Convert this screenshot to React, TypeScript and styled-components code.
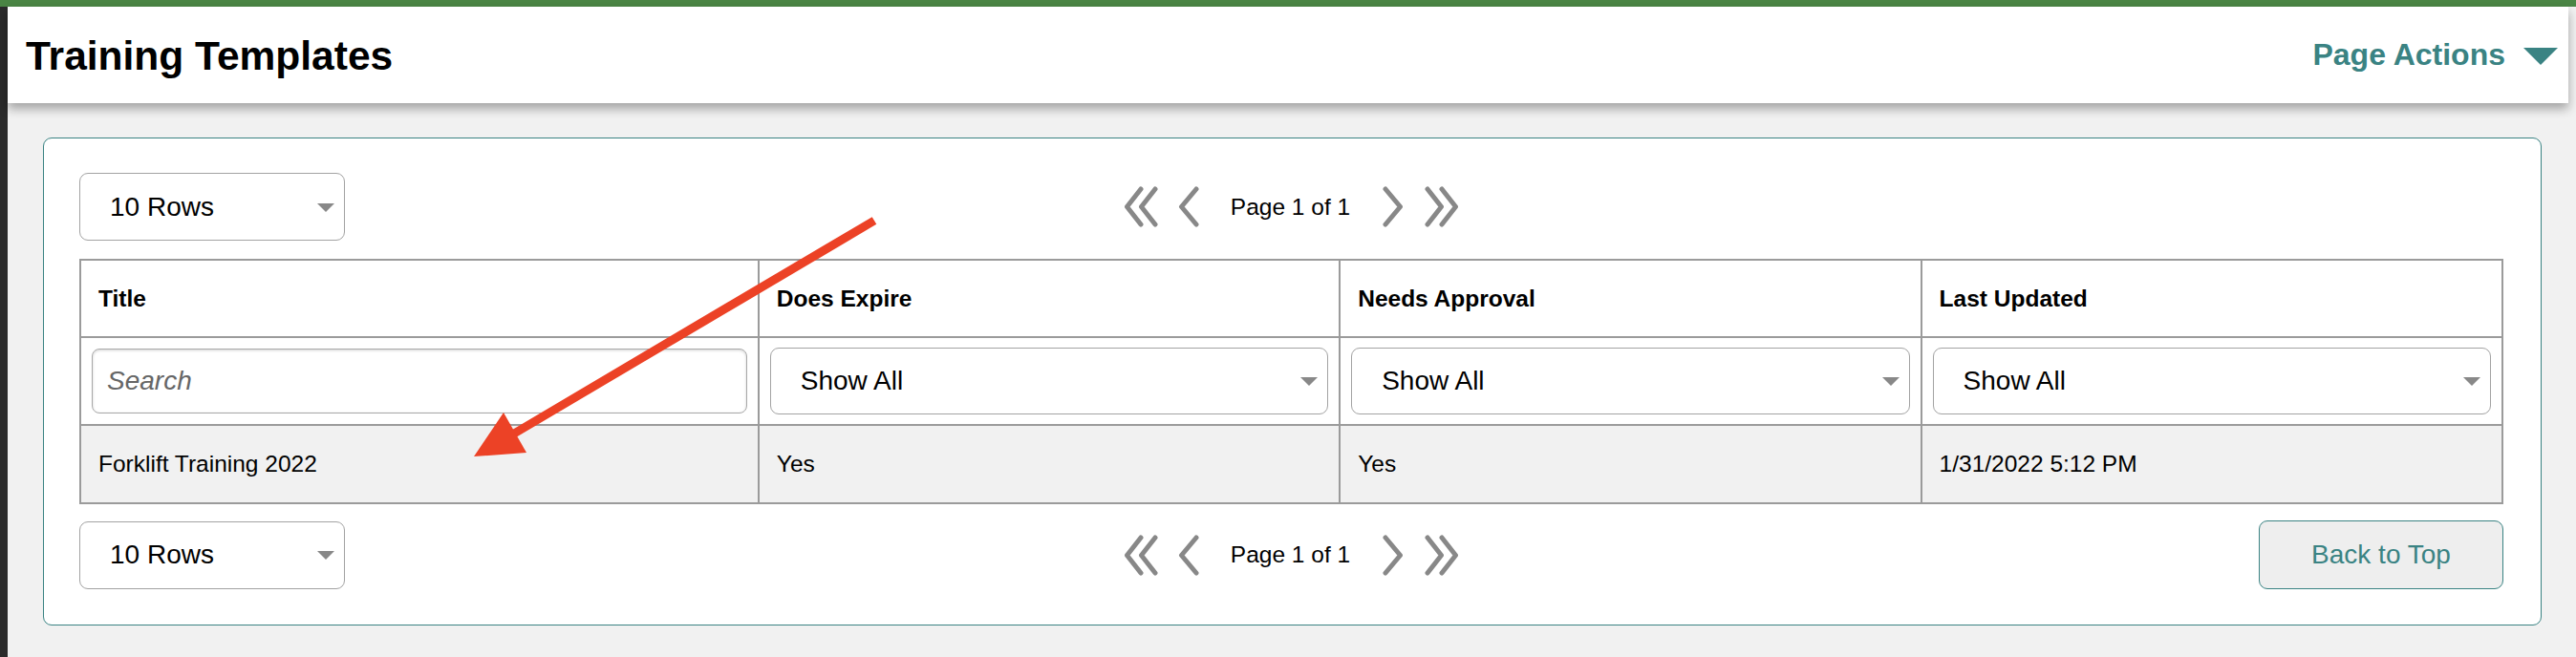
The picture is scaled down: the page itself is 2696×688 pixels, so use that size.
import React from "react";
import styled, { createGlobalStyle } from "styled-components";

const teal = "#3a8383";
const grid = "#9b9b9b";

const GlobalStyle = createGlobalStyle`
  html, body {
    margin: 0;
    padding: 0;
    background: #f1f1f1;
    font-family: "Liberation Sans", Arial, Helvetica, sans-serif;
    color: #000;
  }
  * { box-sizing: border-box; }
`;

const Page = styled.div`
  display: flex;
  flex-direction: column;
  min-height: 100vh;
  position: relative;
`;

const TopBar = styled.div`
  height: 7px;
  background: #4a8544;
`;

const Body = styled.div`
  flex: 1;
  display: flex;
`;

const SideStrip = styled.div`
  width: 8px;
  background: #2b2b2b;
`;

const Main = styled.div`
  flex: 1;
  display: flex;
  flex-direction: column;
`;

const Header = styled.header`
  height: 101px;
  margin-right: 8px;
  background: #fff;
  display: flex;
  align-items: center;
  justify-content: space-between;
  padding: 0 11px 0 19px;
  box-shadow: 0 6px 10px rgba(0, 0, 0, 0.32);
  position: relative;
  z-index: 1;
`;

const Title = styled.h1`
  margin: 0;
  font-size: 42.5px;
  font-weight: 700;
  padding-top: 2px;
`;

const ActionsButton = styled.button`
  display: flex;
  align-items: center;
  gap: 19px;
  border: 0;
  background: none;
  padding: 0;
  font-family: inherit;
  font-size: 32px;
  font-weight: 700;
  color: ${teal};
  cursor: pointer;
`;

const DownTriangle = styled.span`
  width: 0;
  height: 0;
  border-left: 18px solid transparent;
  border-right: 18px solid transparent;
  border-top: 18px solid ${teal};
  margin-top: 2px;
`;

const Content = styled.main`
  padding: 36px 36px 0 37px;
`;

const Card = styled.section`
  background: #fff;
  border: 1px solid ${teal};
  border-radius: 9px;
  padding: 36px 39px 37px 37px;
`;

const Toolbar = styled.div<{ $top?: boolean }>`
  display: grid;
  grid-template-columns: 1fr auto 1fr;
  align-items: center;
  margin: ${(p) => (p.$top ? "0 0 19px" : "17px 0 0")};
`;

const SelectBox = styled.div<{ $width?: string; $height?: number }>`
  position: relative;
  width: ${(p) => p.$width ?? "278px"};
  height: ${(p) => p.$height ?? 71}px;
  border: 1px solid #a3a3a3;
  border-radius: 9px;
  background: #fff;
  display: flex;
  align-items: center;
  padding-left: 31px;
  font-size: 28px;
  color: #000;
`;

const Caret = styled.span`
  position: absolute;
  right: 10px;
  top: 50%;
  margin-top: -4px;
  width: 0;
  height: 0;
  border-left: 9px solid transparent;
  border-right: 9px solid transparent;
  border-top: 9px solid #888;
`;

const Pager = styled.nav`
  display: flex;
  align-items: center;
`;

const PagerLabel = styled.span`
  font-size: 24.5px;
  margin: 0 34px 0 33px;
`;

const ChevronIcon = styled.svg<{ $gap?: number }>`
  display: block;
  margin-left: ${(p) => p.$gap ?? 0}px;
`;

const RightCell = styled.div`
  display: flex;
  justify-content: flex-end;
`;

const BackButton = styled.button`
  width: 256px;
  height: 72px;
  background: #eeeeee;
  border: 1px solid ${teal};
  border-radius: 9px;
  color: ${teal};
  font-family: inherit;
  font-size: 28px;
  cursor: pointer;
`;

const Table = styled.table`
  width: 100%;
  border-collapse: collapse;
  table-layout: fixed;
  border: 2px solid ${grid};
`;

const HeadCell = styled.th`
  height: 81px;
  border: 2px solid ${grid};
  text-align: left;
  font-size: 24.5px;
  font-weight: 700;
  padding: 0 18px;
`;

const FilterCell = styled.td`
  height: 92px;
  border: 2px solid ${grid};
  padding: 0 11px;
`;

const DataCell = styled.td`
  height: 82px;
  border: 2px solid ${grid};
  background: #f1f1f1;
  font-size: 24.5px;
  padding: 0 18px;
`;

const SearchInput = styled.input`
  display: block;
  width: 100%;
  height: 68px;
  border: 1px solid #a8a8a8;
  border-radius: 8px;
  box-shadow: inset 0 1px 3px rgba(0, 0, 0, 0.18);
  padding: 0 15px;
  font-family: inherit;
  font-size: 28px;
  &::placeholder {
    font-style: italic;
    color: #666;
  }
`;

const Annotation = styled.svg`
  position: absolute;
  left: 0;
  top: 0;
  pointer-events: none;
  z-index: 5;
`;

const Chevron = ({ dir, double, gap }: { dir: "left" | "right"; double?: boolean; gap?: number }) => {
  const w = double ? 36 : 22;
  const flip = dir === "right" ? `translate(${w} 0) scale(-1 1)` : undefined;
  return (
    <ChevronIcon $gap={gap} width={w} height={43} viewBox={`0 0 ${w} 43`}>
      <g transform={flip} fill="none" stroke="#888" strokeWidth={5} strokeLinecap="round" strokeLinejoin="round">
        {double ? (
          <>
            <path d="M18 3 L3.5 21.5 L18 40" />
            <path d="M33 3 L18.5 21.5 L33 40" />
          </>
        ) : (
          <path d="M19 3 L3.5 21.5 L19 40" />
        )}
      </g>
    </ChevronIcon>
  );
};

const Pagination = () => (
  <Pager>
    <Chevron dir="left" double />
    <Chevron dir="left" gap={21} />
    <PagerLabel>Page 1 of 1</PagerLabel>
    <Chevron dir="right" />
    <Chevron dir="right" double gap={22} />
  </Pager>
);

const RowsSelect = () => (
  <SelectBox>
    10 Rows
    <Caret />
  </SelectBox>
);

const columns = ["Title", "Does Expire", "Needs Approval", "Last Updated"];
const widths = ["28%", "24%", "24%", "24%"];
const rows = [["Forklift Training 2022", "Yes", "Yes", "1/31/2022 5:12 PM"]];

export default function App() {
  return (
    <>
      <GlobalStyle />
      <Page>
        <TopBar />
        <Body>
          <SideStrip />
          <Main>
            <Header>
              <Title>Training Templates</Title>
              <ActionsButton>
                Page Actions
                <DownTriangle />
              </ActionsButton>
            </Header>
            <Content>
              <Card>
                <Toolbar $top>
                  <div>
                    <RowsSelect />
                  </div>
                  <Pagination />
                  <div />
                </Toolbar>
                <Table>
                  <colgroup>
                    {widths.map((w, i) => (
                      <col key={i} style={{ width: w }} />
                    ))}
                  </colgroup>
                  <thead>
                    <tr>
                      {columns.map((c) => (
                        <HeadCell key={c}>{c}</HeadCell>
                      ))}
                    </tr>
                    <tr>
                      <FilterCell>
                        <SearchInput placeholder="Search" />
                      </FilterCell>
                      {columns.slice(1).map((c) => (
                        <FilterCell key={c}>
                          <SelectBox $width="100%" $height={70}>
                            Show All
                            <Caret />
                          </SelectBox>
                        </FilterCell>
                      ))}
                    </tr>
                  </thead>
                  <tbody>
                    {rows.map((r, i) => (
                      <tr key={i}>
                        {r.map((v, j) => (
                          <DataCell key={j}>{v}</DataCell>
                        ))}
                      </tr>
                    ))}
                  </tbody>
                </Table>
                <Toolbar>
                  <div>
                    <RowsSelect />
                  </div>
                  <Pagination />
                  <RightCell>
                    <BackButton>Back to Top</BackButton>
                  </RightCell>
                </Toolbar>
              </Card>
            </Content>
          </Main>
        </Body>
        <Annotation width={2696} height={688} viewBox="0 0 2696 688">
          <line x1={915} y1={231} x2={533} y2={457} stroke="#ec4226" strokeWidth={9} />
          <polygon points="496,478 527,432 551,474" fill="#ec4226" />
        </Annotation>
      </Page>
    </>
  );
}
